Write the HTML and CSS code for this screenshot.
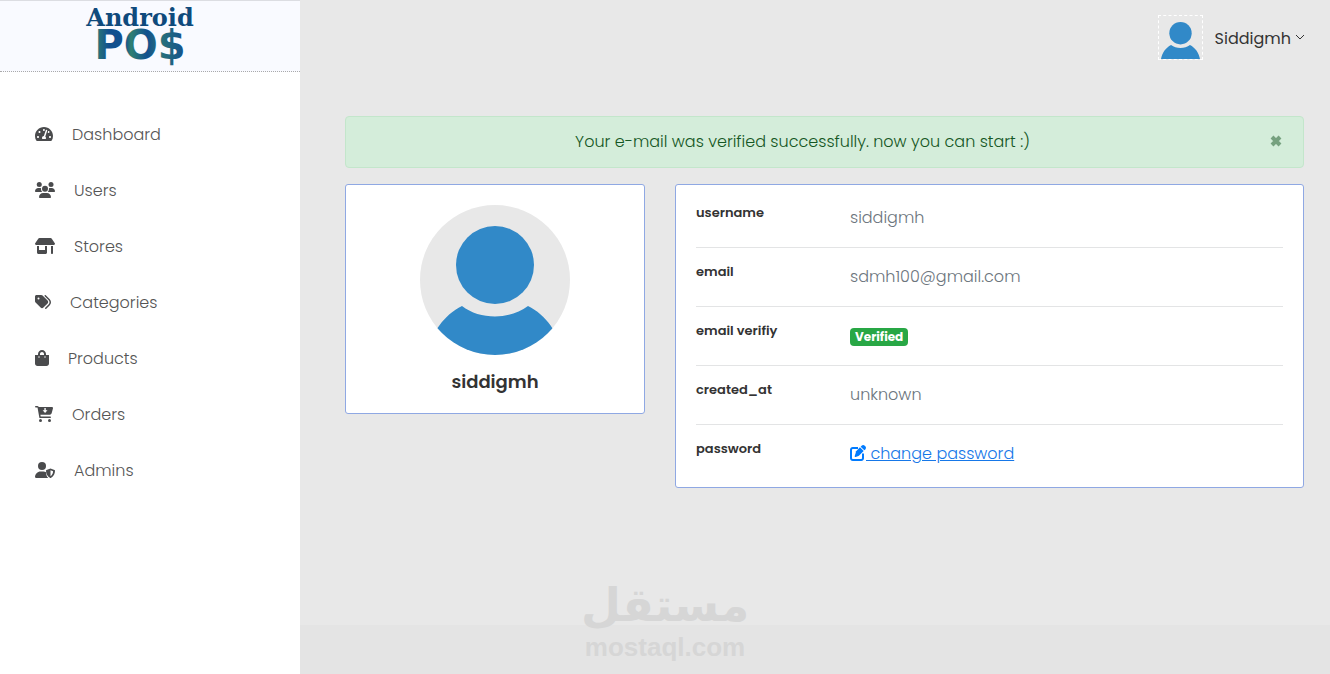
FILE: index.html
```html
<!DOCTYPE html>
<html lang="en">
<head>
    <meta charset="UTF-8">
    <meta name="viewport" content="width=device-width, initial-scale=1.0">
    <title>Android POS</title>
    <link rel="stylesheet" href="styles.css">
</head>
<body>
    <aside class="menu-sidebar">
        <a href="#" class="logo">
            <svg width="150" height="70" viewBox="0 0 150 70" role="img" aria-label="Android POS">
                <defs>
                    <linearGradient id="pos" x1="0" y1="0" x2="1" y2="0">
                        <stop offset="0" stop-color="#2f8072"/>
                        <stop offset=".16" stop-color="#12508f"/>
                        <stop offset=".34" stop-color="#12508f"/>
                        <stop offset=".4" stop-color="#2f8072"/>
                        <stop offset=".58" stop-color="#12508f"/>
                        <stop offset=".72" stop-color="#2a7378"/>
                        <stop offset="1" stop-color="#12508f"/>
                    </linearGradient>
                </defs>
                <text class="logo-top" x="75" y="25" text-anchor="middle">Android</text>
                <text class="logo-bottom" x="75" y="58" text-anchor="middle" fill="url(#pos)">PO$</text>
            </svg>
        </a>
        <nav class="sidebar-nav">
            <a href="#" class="nav-link">
                <svg class="icon" width="18" height="16" viewBox="0 0 576 512"><path d="M288 32C128.94 32 0 160.94 0 320c0 52.8 14.25 102.26 39.06 144.8 5.61 9.62 16.3 15.2 27.44 15.2h443c11.14 0 21.83-5.58 27.44-15.2C561.75 422.26 576 372.8 576 320c0-159.06-128.94-288-288-288zm0 64c14.71 0 26.58 10.13 30.32 23.65-1.11 2.26-2.64 4.23-3.45 6.67l-9.22 27.67c-5.13 3.49-10.97 6.01-17.64 6.01-17.67 0-32-14.33-32-32S270.33 96 288 96zM96 384c-17.67 0-32-14.33-32-32s14.33-32 32-32 32 14.33 32 32-14.33 32-32 32zm48-160c-17.67 0-32-14.33-32-32s14.33-32 32-32 32 14.33 32 32-14.33 32-32 32zm246.77-72.41l-61.33 184C343.13 347.33 352 364.54 352 384c0 11.72-3.38 22.55-8.88 32H232.88c-5.5-9.45-8.88-20.28-8.88-32 0-33.94 26.5-61.43 59.9-63.59l61.34-184.01c4.17-12.56 17.73-19.45 30.36-15.17 12.57 4.19 19.35 17.79 15.17 30.36zm14.66 57.2l15.52-46.55c3.47-1.29 7.13-2.23 11.05-2.23 17.67 0 32 14.33 32 32s-14.33 32-32 32c-11.38-.01-20.89-6.28-26.57-15.22zM480 384c-17.67 0-32-14.33-32-32s14.33-32 32-32 32 14.33 32 32-14.33 32-32 32z"/></svg>
                <span>Dashboard</span>
            </a>
            <a href="#" class="nav-link">
                <svg class="icon" width="20" height="16" viewBox="0 0 640 512"><circle cx="136" cy="80" r="80"/><circle cx="512" cy="80" r="80"/><circle cx="320" cy="216" r="96"/><path d="M0 299c0-59 48-107 107-107h42c16 0 31 4 45 10-6 50 6 90 40 118H21c-12 0-21-9-21-21zM406 320c32-28 46-68 40-118 14-6 29-10 45-10h42c59 0 107 48 107 107 0 12-9 21-21 21zM128 485c0-74 60-133 133-133h118c73 0 133 59 133 133 0 15-12 27-27 27H155c-15 0-27-12-27-27z"/></svg>
                <span>Users</span>
            </a>
            <a href="#" class="nav-link">
                <svg class="icon" width="20" height="16" viewBox="0 0 640 512"><path d="M37 224h566c20 0 37-17 37-37 0-7-2-14-6-20L538 22c-9-14-24-22-40-22H143c-16 0-31 8-40 22L6 167c-4 6-6 13-6 20 0 20 17 37 37 37zM64 256v208c0 27 21 48 48 48h224c27 0 48-21 48-48V256h-64v128H128V256zm448 0v224c0 18 14 32 32 32s32-14 32-32V256z"/></svg>
                <span>Stores</span>
            </a>
            <a href="#" class="nav-link">
                <svg class="icon" width="16" height="16" viewBox="0 0 512 512"><path fill-rule="evenodd" d="M0 80v150c0 17 7 33 19 45l160 160c25 25 65 25 90 0l134-134c25-25 25-65 0-90L243 51c-12-12-28-19-45-19H48C22 32 0 53 0 80zm112 32a32 32 0 1 1 0 64 32 32 0 1 1 0-64z"/><path d="M345 39l128 129c52 53 52 138 0 191L361 473c-9 9-24 10-34 0-9-9-9-24 0-34l112-113c34-35 34-90 0-125L311 73c-9-9-9-24 0-34s25-9 34 0z"/></svg>
                <span>Categories</span>
            </a>
            <a href="#" class="nav-link">
                <svg class="icon" width="14" height="16" viewBox="0 0 448 512"><path d="M352 160v-32C352 57.42 294.579 0 224 0 153.42 0 96 57.42 96 128v32H0v272c0 44.183 35.817 80 80 80h288c44.183 0 80-35.817 80-80V160h-96zm-192-32c0-35.29 28.71-64 64-64s64 28.71 64 64v32H160v-32zm160 120c-13.255 0-24-10.745-24-24s10.745-24 24-24 24 10.745 24 24-10.745 24-24 24zm-192 0c-13.255 0-24-10.745-24-24s10.745-24 24-24 24 10.745 24 24-10.745 24-24 24z"/></svg>
                <span>Products</span>
            </a>
            <a href="#" class="nav-link">
                <svg class="icon" width="18" height="16" viewBox="0 0 576 512"><path fill-rule="evenodd" d="M24 0h46c22 0 42 13 51 32h425c20 0 35 19 30 38l-41 152c-9 35-41 60-77 60H172l10 54h306c13 0 24 11 24 24s-11 24-24 24H162c-12 0-22-8-24-20L82 52c-1-2-3-4-6-4H24C11 48 0 37 0 24S11 0 24 0zm276 64v72h-56l78 90 78-90h-56V64z"/><circle cx="176" cy="464" r="48"/><circle cx="464" cy="464" r="48"/></svg>
                <span>Orders</span>
            </a>
            <a href="#" class="nav-link">
                <svg class="icon" width="20" height="16" viewBox="0 0 640 512"><circle cx="224" cy="128" r="128"/><path fill-rule="evenodd" d="M0 482c0-98 80-178 178-178h92c30 0 58 7 82 20 0 80 24 142 74 188H30c-17 0-30-13-30-30zM496 206l128 50c10 4 16 13 16 24 0 84-36 184-134 230-6 3-14 3-20 0-98-46-134-146-134-230 0-11 6-20 16-24zm0 58v188c57-32 80-92 83-155z"/></svg>
                <span>Admins</span>
            </a>
        </nav>
    </aside>

    <div class="page-container">
        <header class="header-desktop">
            <button type="button" class="account">
                <svg class="account-image" viewBox="0 0 150 150"><rect width="150" height="150" fill="#e8e8e8"/><circle cx="75" cy="60" r="39"/><path d="M42 101c18 14 48 14 66 0 18 9 31 27 35 49H7c4-22 17-40 35-49z"/></svg>
                <span>Siddigmh</span>
                <svg class="chevron" width="10" height="7" viewBox="0 0 10 7"><path d="M1 1l4 4 4-4"/></svg>
            </button>
        </header>

        <main class="main-content">
            <div class="alert" role="alert">
                <span>Your e-mail was verified successfully. now you can start :)</span>
                <button type="button" class="close" aria-label="Close">
                    <svg width="14" height="14" viewBox="0 0 14 14"><path d="M3 2l8 8M11 2l-8 8"/></svg>
                </button>
            </div>

            <div class="profile">
                <section class="card user-card">
                    <svg class="avatar" viewBox="0 0 150 150"><rect width="150" height="150" fill="#e8e8e8"/><circle cx="75" cy="60" r="39"/><path d="M42 101c18 14 48 14 66 0 18 9 31 27 35 49H7c4-22 17-40 35-49z"/></svg>
                    <h4 class="user-name">siddigmh</h4>
                </section>

                <dl class="card details">
                    <div class="detail-row">
                        <dt>username</dt>
                        <dd>siddigmh</dd>
                    </div>
                    <div class="detail-row">
                        <dt>email</dt>
                        <dd>sdmh100@gmail.com</dd>
                    </div>
                    <div class="detail-row">
                        <dt>email verifiy</dt>
                        <dd><span class="badge">Verified</span></dd>
                    </div>
                    <div class="detail-row">
                        <dt>created_at</dt>
                        <dd>unknown</dd>
                    </div>
                    <div class="detail-row">
                        <dt>password</dt>
                        <dd><a href="#" class="change-link"><svg class="edit-icon" width="16" height="16" viewBox="0 0 512 512"><path d="M472 22l18 18c28 28 28 73 0 101l-30 30L341 52l30-30c28-28 73-28 101 0zM173 220L318 75l119 119-145 145c-6 6-14 11-23 14l-88 29c-9 3-18 1-25-6s-9-16-6-25l29-88c3-9 8-17 14-23zM88 64h168v64H88c-13 0-24 11-24 24v272c0 13 11 24 24 24h272c13 0 24-11 24-24V272h64v152c0 49-39 88-88 88H88c-49 0-88-39-88-88V152c0-49 39-88 88-88z"/></svg> change password</a></dd>
                    </div>
                </dl>
            </div>
        </main>

        <footer class="footer"></footer>
    </div>

    <div class="watermark">
        <span class="watermark-ar" lang="ar">مستقل</span>
        <span class="watermark-en">mostaql.com</span>
    </div>
</body>
</html>
```

FILE: styles.css
```css
* {
    box-sizing: border-box;
}

body {
    display: flex;
    min-height: 100vh;
    margin: 0;
    background-color: #e8e8e8;
    color: #333;
    font-family: Poppins, Inter, sans-serif;
    font-size: 16px;
    font-weight: 300;
    line-height: 26px;
}

/* Sidebar */
.menu-sidebar {
    flex: 0 0 300px;
    background-color: #fff;
}

.logo {
    display: flex;
    align-items: center;
    height: 72px;
    padding-left: 65px;
    background-color: #f9faff;
    border-top: 1px solid #dcdde2;
    border-bottom: 1px dotted #aaa;
}

.logo-top {
    font-family: "DejaVu Serif", serif;
    font-size: 24px;
    font-weight: bold;
    fill: #0f4a7c;
}

.logo-bottom {
    font-family: "DejaVu Sans", sans-serif;
    font-size: 40px;
    font-weight: bold;
}

.sidebar-nav {
    display: flex;
    flex-direction: column;
    padding: 34px 35px;
}

.nav-link {
    display: flex;
    align-items: center;
    gap: 19px;
    height: 56px;
    color: #555;
    text-decoration: none;
}

.nav-link span {
    padding-top: 2px;
}

.icon {
    fill: #4a4b4d;
}

/* Header */
.page-container {
    display: flex;
    flex: 1;
    flex-direction: column;
}

.header-desktop {
    display: flex;
    justify-content: flex-end;
    padding: 15px 25px 0 45px;
}

.account {
    display: flex;
    align-items: center;
    padding: 0;
    border: 0;
    background: none;
    color: #333;
    font: inherit;
    font-weight: 400;
    cursor: pointer;
}

.account span {
    padding-top: 2px;
}

.account-image {
    width: 45px;
    height: 45px;
    margin-right: 12px;
    border: 1px dashed #fff;
    fill: #3189c8;
}

.chevron {
    margin-left: 4px;
    fill: none;
    stroke: #333;
}

/* Content */
.main-content {
    padding: 56px 26px 30px 45px;
}

.alert {
    display: flex;
    align-items: center;
    padding: 12px 20px;
    margin-bottom: 16px;
    background-color: #d4edda;
    border: 1px solid #c3e6cb;
    border-radius: 4px;
    color: #155724;
    text-align: center;
}

.alert span {
    flex: 1;
}

.close {
    display: flex;
    padding: 0;
    margin-left: 30px;
    border: 0;
    background: none;
    cursor: pointer;
}

.close path {
    stroke: #76a17f;
    stroke-width: 4;
}

.profile {
    display: flex;
    align-items: flex-start;
    gap: 30px;
}

.card {
    padding: 20px;
    margin: 0;
    background-color: #fff;
    border: 1px solid #8fa8e3;
    border-radius: 3px;
}

.user-card {
    display: flex;
    flex-direction: column;
    align-items: center;
    flex: 0 0 300px;
}

.avatar {
    width: 150px;
    height: 150px;
    border-radius: 50%;
    fill: #3189c8;
}

.user-name {
    margin: 16px 0 0;
    font-size: 18px;
    font-weight: 600;
    line-height: 22px;
}

.details {
    flex: 1;
}

.detail-row {
    display: grid;
    grid-template-columns: 154px 1fr;
    padding-bottom: 16px;
    margin-bottom: 16px;
    border-bottom: 1px solid #e3e4e5;
}

.detail-row:last-child {
    padding-bottom: 0;
    margin-bottom: 0;
    border-bottom: 0;
}

.detail-row dt {
    font-size: 13px;
    font-weight: 600;
    line-height: 16px;
}

.detail-row dd {
    margin: 0;
    color: #6c757d;
}

.badge {
    display: inline-block;
    padding: 3px 5px;
    border-radius: 4px;
    background-color: #28a745;
    color: #fff;
    font-size: 12px;
    font-weight: 700;
    line-height: 12px;
}

.change-link {
    color: #1677e8;
}

.edit-icon {
    fill: #007bff;
    vertical-align: -2px;
}

.footer {
    height: 49px;
    margin-top: auto;
    background-color: #e4e4e4;
}

/* Watermark over the page */
.watermark {
    position: absolute;
    bottom: 12px;
    left: 50%;
    display: flex;
    flex-direction: column;
    align-items: center;
    color: #d6d6d6;
    font-weight: bold;
    transform: translateX(-50%);
}

.watermark-ar {
    font-family: "DejaVu Sans", sans-serif;
    font-size: 46px;
    line-height: 54px;
}

.watermark-en {
    font-family: "Liberation Sans", sans-serif;
    font-size: 26px;
    line-height: 30px;
}
```
